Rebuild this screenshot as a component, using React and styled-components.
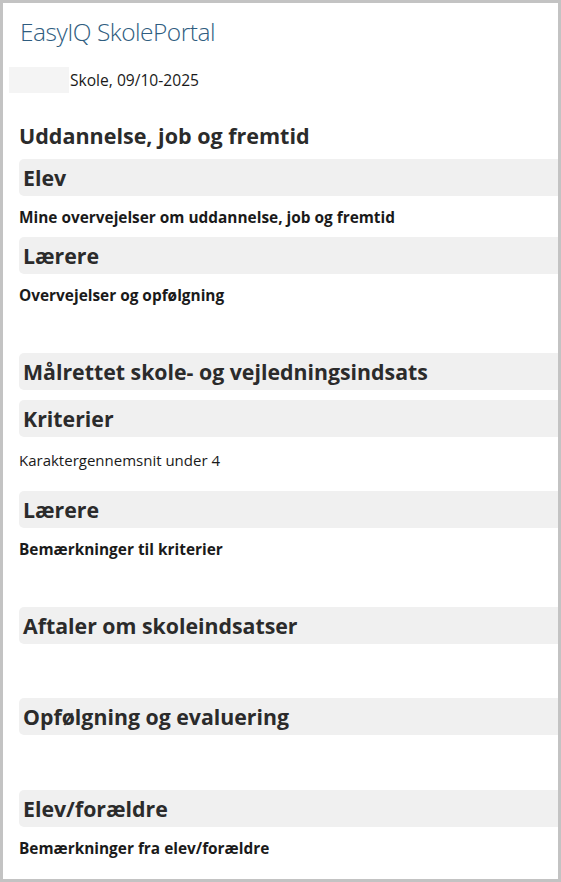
import React from "react";
import styled, { createGlobalStyle } from "styled-components";

const Global = createGlobalStyle`
  html, body { margin: 0; padding: 0; background: #ffffff; }
  body { font-family: "Open Sans", "Noto Sans", sans-serif; color: #222; }
  * { box-sizing: border-box; }
`;

const Frame = styled.div`
  width: 561px;
  height: 882px;
  border: 3px solid #c3c3c3;
  overflow: hidden;
  background: #fff;
`;

const Content = styled.div`
  padding: 13px 0 0 16px;
  display: flex;
  flex-direction: column;
`;

const Title = styled.h1`
  margin: 0 0 0 1px;
  font-size: 24.5px;
  font-weight: 300;
  line-height: 32px;
  letter-spacing: -0.5px;
  color: #2f5d80;
`;

const MetaRow = styled.div`
  display: flex;
  align-items: center;
  margin: 19px 0 0 -10px;
  height: 26px;
  font-size: 15.6px;
  color: #1a1a1a;
`;

const Redacted = styled.span`
  width: 60px;
  height: 26px;
  background: #f4f4f4;
  margin-right: 1px;
`;

const GroupTitle = styled.h2`
  margin: 28px 0 9px 0;
  font-size: 21.5px;
  font-weight: 700;
  line-height: 29px;
  color: #2b2b2b;
`;

const Bar = styled.div`
  height: 37px;
  display: flex;
  align-items: center;
  padding-left: 4px;
  margin-bottom: 10px;
  background: #f0f0f0;
  border-radius: 5px 0 0 5px;
  font-size: 21.3px;
  font-weight: 700;
  color: #2b2b2b;
  white-space: nowrap;
`;

const Label = styled.div`
  padding-top: 1px;
  line-height: 21px;
  font-size: 15.4px;
  font-weight: 700;
  color: #1a1a1a;
  white-space: nowrap;
  margin-bottom: ${(p) => (p.$last ? "47px" : "9px")};
`;

const Value = styled.div`
  padding-top: 3px;
  min-height: ${(p) => p.$h || 44}px;
  line-height: 20px;
  font-size: 15px;
  color: #1a1a1a;
`;

export default function App() {
  return (
    <>
      <Global />
      <Frame>
        <Content>
          <Title>EasyIQ SkolePortal</Title>
          <MetaRow>
            <Redacted />
            Skole, 09/10-2025
          </MetaRow>
          <GroupTitle>Uddannelse, job og fremtid</GroupTitle>
          <Bar>Elev</Bar>
          <Label>Mine overvejelser om uddannelse, job og fremtid</Label>
          <Bar>Lærere</Bar>
          <Label $last>Overvejelser og opfølgning</Label>
          <Bar>Målrettet skole- og vejledningsindsats</Bar>
          <Bar>Kriterier</Bar>
          <Value>Karaktergennemsnit under 4</Value>
          <Bar>Lærere</Bar>
          <Label $last>Bemærkninger til kriterier</Label>
          <Bar>Aftaler om skoleindsatser</Bar>
          <Value />
          <Bar>Opfølgning og evaluering</Bar>
          <Value $h={45} />
          <Bar>Elev/forældre</Bar>
          <Label>Bemærkninger fra elev/forældre</Label>
        </Content>
      </Frame>
    </>
  );
}
